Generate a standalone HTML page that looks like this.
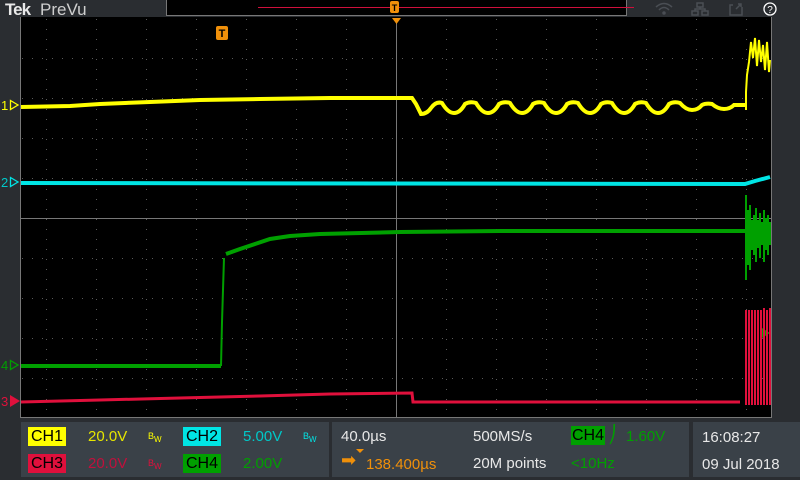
<!DOCTYPE html>
<html><head><meta charset="utf-8"><style>
body{margin:0;width:800px;height:480px;background:#2a2d31;overflow:hidden;font-family:"Liberation Sans",sans-serif;position:relative}
.t{position:absolute;font-size:15px;white-space:nowrap}
.box{position:absolute;background:#3a4148}
.lab{position:absolute;height:19px;line-height:19px;font-size:16px;color:#000;padding:0 3px}
</style></head><body>
<div class="t" style="left:5px;top:0px;color:#e8e8e8;font-weight:bold;font-size:17px;letter-spacing:-1px">Tek</div>
<div class="t" style="left:40px;top:0px;color:#cfcfcf;font-size:17px">PreVu</div>
<div style="position:absolute;left:166px;top:0;width:459px;height:15px;background:#000;border:1px solid #777;border-top:none"></div>
<div style="position:absolute;left:258px;top:7px;width:376px;height:1px;background:#d0103c"></div>
<svg style="position:absolute;left:0;top:0" width="800" height="480">
 <rect x="390" y="1" width="9" height="12" rx="2" fill="#f0900a"/>
 <text x="394.5" y="11" font-size="9" text-anchor="middle" fill="#000" font-family="Liberation Sans" font-weight="bold">T</text>
 <g stroke="#4a4e54" fill="none" stroke-width="1.5">
  <path d="M656 7 Q664 0 672 7 M659 10 Q664 5 669 10"/><circle cx="664" cy="13" r="1" fill="#4a4e54"/>
  <rect x="697" y="3" width="6" height="4"/><rect x="692" y="11" width="6" height="4"/><rect x="702" y="11" width="6" height="4"/><path d="M700 7v2M695 11V9h10v2"/>
  <path d="M733 5h-3v10h12V7M736 9l5-5M738 4h3v3"/>
 </g>
 <circle cx="770" cy="9" r="6" stroke="#fff" fill="none" stroke-width="1.3"/>
 <text x="770" y="13" font-size="10" text-anchor="middle" fill="#fff" font-family="Liberation Sans">?</text>
 <rect x="20" y="17" width="752" height="401" fill="#000"/>
 <path d="M20.5 17v401M771.5 17v401M20 417.5h752" stroke="#777" stroke-width="1" fill="none"/>
 <g stroke="#5a5a5a" stroke-width="1" stroke-dasharray="1 9">
  <path d="M46.5 19V416M96.5 19V416M146.5 19V416M196.5 19V416M246.5 19V416M296.5 19V416M346.5 19V416M446.5 19V416M496.5 19V416M546.5 19V416M596.5 19V416M646.5 19V416M696.5 19V416M746.5 19V416"/>
  <path d="M22 58.5H771M22 98.5H771M22 138.5H771M22 178.5H771M22 258.5H771M22 298.5H771M22 338.5H771M22 378.5H771"/>
 </g>
 <path d="M396.5 18V417M21 218.5H771" stroke="#777" stroke-width="1"/>
 <path d="M392 18 L396.5 24 L401 18Z" fill="#f0900a"/>
 <rect x="216" y="26" width="12" height="14" rx="2" fill="#f0900a"/>
 <text x="222" y="37" font-size="11" text-anchor="middle" fill="#000" font-weight="bold" font-family="Liberation Sans">T</text>
 <g fill="none" stroke="#ffff00">
  <path stroke-width="4" d="M21 107 L70 106 L100 104 L150 102 L200 100 L260 99 L330 98 L412 98 L416 104 L421 114 Q427 114 431 108 Q436 101 442 103 Q448 113 454 113 Q460 113 465 104 Q470 101 476 103 Q482 113 488 113 Q494 113 499 104 Q504 101 510 103 Q516 113 522 113 Q528 113 533 104 Q538 101 544 103 Q550 113 556 113 Q562 113 567 104 Q572 101 578 103 Q584 113 590 113 Q596 113 601 104 Q606 101 612 103 Q618 113 624 113 Q630 113 635 104 Q640 101 646 103 Q652 113 658 113 Q664 113 669 104 Q674 101 680 103 Q686 110 692 110 Q698 110 702 105 Q706 103 712 104 Q718 109 724 109 Q730 109 734 105 L745 105"/>
  <path stroke-width="2" d="M746 110 L746 92 L747 75 L749 62 L751 42 L753 58 L755 38 L757 66 L759 40 L761 62 L763 45 L765 70 L767 42 L769 72 L770 60"/>
 </g>
 <path d="M21 183 L745 184 L755 181 L770 177" stroke="#00e5e5" stroke-width="4" fill="none"/>
 <g fill="none" stroke="#00a000">
  <path stroke-width="4" d="M21 366 L221 366"/>
  <path stroke-width="2" d="M221 366 L222 322 L224 258"/>
  <path stroke-width="4" d="M226 254 L240 249 L255 244 L270 239 L290 236 L320 234 L400 232 L500 231 L745 231"/>
  <path stroke-width="2" d="M746 195 V280 M748 210V265 M750 205V270 M752 220V250 M754 215V255 M756 208V262 M758 220V248 M760 213V258 M762 222V245 M764 210V262 M766 218V250 M768 215V255 M770 222V245"/>
 </g>
 <path d="M770 333 L762 328 L762 338Z" fill="#00a000"/>
 <g fill="none" stroke="#e0103c">
  <path stroke-width="3" d="M21 402 L100 400 L180 398 L260 396 L330 394 L412 393 L413 402 L740 402"/>
  <path stroke-width="2" d="M746 310V405M749 310V405M752 310V405M755 310V405M758 310V405M761 310V405M764 308V405M767 310V405M770 308V405"/>
 </g>
 <g font-family="Liberation Sans" font-size="13">
  <text x="1" y="110" fill="#ffff00">1</text><path d="M10.5 100.5 L18 105 L10.5 109.5Z" stroke="#ffff00" fill="none" stroke-width="1.3"/>
  <text x="1" y="187" fill="#00c8c8">2</text><path d="M10.5 177.5 L18 182 L10.5 186.5Z" stroke="#00e5e5" fill="none" stroke-width="1.3"/>
  <text x="1" y="370" fill="#00a000">4</text><path d="M10.5 360.5 L18 365 L10.5 369.5Z" stroke="#00a000" fill="none" stroke-width="1.3"/>
  <text x="1" y="406" fill="#e0103c">3</text><path d="M10 395 L20 401 L10 407Z" fill="#e0103c"/>
 </g>
</svg>
<div class="box" style="left:21px;top:422px;width:308px;height:55px"></div>
<div class="box" style="left:332px;top:422px;width:357px;height:55px"></div>
<div class="box" style="left:693px;top:422px;width:107px;height:55px"></div>
<div class="lab" style="left:28px;top:427px;background:#ffff00">CH1</div>
<div class="t" style="left:88px;top:428px;color:#e6e600">20.0V</div>
<div class="t" style="left:148px;top:431px;color:#ffff00;font-size:9px">B<sub style="font-size:8px">W</sub></div>
<div class="lab" style="left:183px;top:427px;background:#00e5e5">CH2</div>
<div class="t" style="left:243px;top:428px;color:#00c8c8">5.00V</div>
<div class="t" style="left:303px;top:431px;color:#00e5e5;font-size:9px">B<sub style="font-size:8px">W</sub></div>
<div class="lab" style="left:28px;top:454px;background:#e0103c">CH3</div>
<div class="t" style="left:88px;top:455px;color:#c0103c">20.0V</div>
<div class="t" style="left:148px;top:458px;color:#e0103c;font-size:9px">B<sub style="font-size:8px">W</sub></div>
<div class="lab" style="left:183px;top:454px;background:#00a000">CH4</div>
<div class="t" style="left:243px;top:455px;color:#00a000">2.00V</div>
<div class="t" style="left:341px;top:428px;color:#e8e8e8">40.0µs</div>
<div class="t" style="left:341px;top:450px;color:#f0900a;font-size:18px">➡</div>
<div style="position:absolute;left:356px;top:449px;width:0;height:0;border-left:4px solid transparent;border-right:4px solid transparent;border-top:4px solid #f0900a"></div>
<div class="t" style="left:366px;top:456px;color:#f0900a">138.400µs</div>
<div class="t" style="left:473px;top:428px;color:#e8e8e8">500MS/s</div>
<div class="t" style="left:473px;top:455px;color:#e8e8e8">20M points</div>
<div class="lab" style="left:571px;top:426px;background:#00a000;padding:0 1px">CH4</div>
<div class="t" style="left:608px;top:425px;color:#00a000;font-size:17px">⎠</div>
<div class="t" style="left:626px;top:428px;color:#00a000">1.60V</div>
<div class="t" style="left:571px;top:455px;color:#00a000">&lt;10Hz</div>
<div class="t" style="left:702px;top:429px;color:#e8e8e8">16:08:27</div>
<div class="t" style="left:702px;top:456px;color:#e8e8e8">09 Jul 2018</div>
</body></html>
